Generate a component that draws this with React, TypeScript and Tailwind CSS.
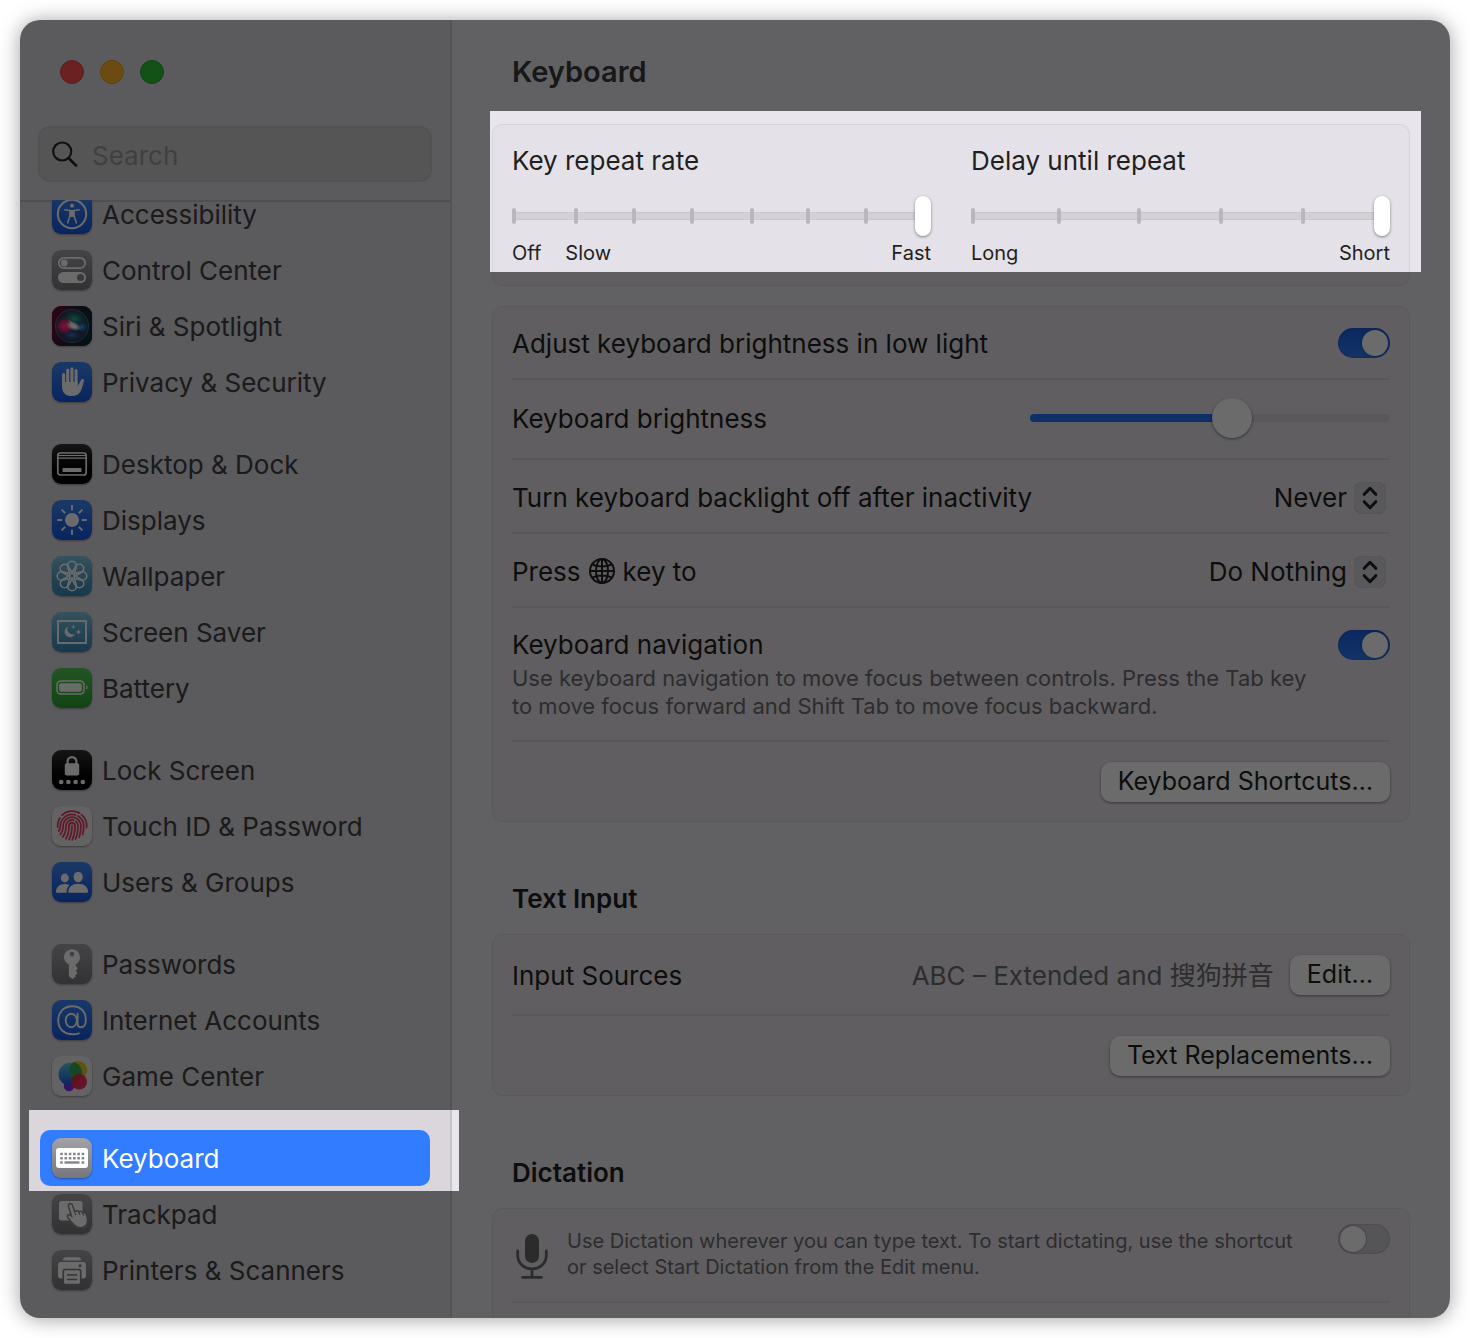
import React from "react";

const BLUE = "bg-linear-to-b from-[#3f86f5] to-[#1457e0]";
const GRAY = "bg-linear-to-b from-[#a3a3a7] to-[#77777b]";
const BLACK = "bg-linear-to-b from-[#333333] to-black";
const SKY = "bg-linear-to-b from-[#7cc4de] to-[#3787b8]";
const GREEN = "bg-linear-to-b from-[#55c957] to-[#2ba22d]";
const WHITE = "bg-[#ececee]";

function Glyph({ children }: { children: React.ReactNode }) {
  return (
    <svg viewBox="0 0 40 40" className="size-10" fill="none" aria-hidden="true">
      {children}
    </svg>
  );
}

function AccessibilityGlyph() {
  return (
    <Glyph>
      <circle cx="20" cy="20" r="14.2" stroke="#fff" strokeWidth="2" />
      <circle cx="20" cy="11.8" r="2" fill="#fff" />
      <path d="M12.8 15.8 18 16.600v4.900l-2.300 7.500M27.200 15.800 22 16.600v4.900l2.300 7.500" stroke="#fff" strokeWidth="1.500" strokeLinecap="round" strokeLinejoin="round" />
      <path d="M17.500 16h5v5.900l-.8 1.200h-3.400l-.8-1.200z" fill="#fff" />
    </Glyph>
  );
}

function ControlCenterGlyph() {
  return (
    <Glyph>
      <rect x="6.800" y="7.800" width="26.400" height="10.400" rx="5.200" stroke="#fff" strokeWidth="1.800" />
      <circle cx="12.300" cy="13" r="3.400" fill="#fff" />
      <rect x="6" y="22" width="28" height="11" rx="5.500" fill="#fff" />
      <circle cx="28.500" cy="27.500" r="3.600" fill="#8a8a8e" />
    </Glyph>
  );
}

function SiriGlyph() {
  return (
    <Glyph>
      <defs>
        <linearGradient id="siri-bg" x1="0" y1="0.300" x2="1" y2="0.600">
          <stop offset="0" stopColor="#6d0d33" />
          <stop offset="0.500" stopColor="#23202f" />
          <stop offset="1" stopColor="#0b2b3c" />
        </linearGradient>
        <radialGradient id="siri-red">
          <stop offset="0" stopColor="#ff3a86" />
          <stop offset="0.500" stopColor="#e02a70" />
          <stop offset="1" stopColor="#c01858" stopOpacity="0" />
        </radialGradient>
        <radialGradient id="siri-blue">
          <stop offset="0" stopColor="#3aa8ff" />
          <stop offset="1" stopColor="#1560c0" stopOpacity="0" />
        </radialGradient>
        <radialGradient id="siri-green">
          <stop offset="0" stopColor="#28b890" />
          <stop offset="1" stopColor="#148060" stopOpacity="0" />
        </radialGradient>
        <radialGradient id="siri-core">
          <stop offset="0" stopColor="#fff" />
          <stop offset="0.300" stopColor="#fff" />
          <stop offset="1" stopColor="#fff" stopOpacity="0" />
        </radialGradient>
      </defs>
      <rect width="40" height="40" fill="url(#siri-bg)" />
      <circle cx="20" cy="20" r="16" fill="#2c3f68" fillOpacity="0.700" />
      <ellipse cx="22" cy="13" rx="13" ry="9" fill="url(#siri-green)" />
      <ellipse cx="13" cy="20" rx="10" ry="9" fill="url(#siri-red)" />
      <ellipse cx="30" cy="21" rx="7" ry="6" fill="url(#siri-blue)" />
      <ellipse cx="20" cy="29" rx="10" ry="6" fill="url(#siri-blue)" fillOpacity="0.600" />
      <ellipse cx="21.500" cy="20" rx="8" ry="4.500" transform="rotate(20 21 20)" fill="url(#siri-core)" />
      <path d="M16 13.500 23 18l3 5-5.500-2z" fill="#fff" fillOpacity="0.700" />
      <circle cx="20" cy="20" r="16.500" stroke="#5b9c98" strokeOpacity="0.700" strokeWidth="0.900" />
    </Glyph>
  );
}

function HandGlyph() {
  return (
    <Glyph>
      <path d="M11.600 12.500v12M15.700 8v14M19.900 6.800v14M24.100 8.500v14" stroke="#fff" strokeWidth="3.100" strokeLinecap="round" />
      <path d="M10 20h15.700v4.500c1.300-2.600 2.300-4.700 3.300-6.600.8-1.400 3.200-.9 2.900 1-.9 4.200-2 8-3.700 11.200-1.600 2.700-4.400 4-8.200 4-6.600 0-10-3.600-10-9.600z" fill="#fff" />
    </Glyph>
  );
}

function DesktopGlyph() {
  return (
    <Glyph>
      <rect x="5.800" y="9" width="28.400" height="22" rx="2.500" stroke="#fff" strokeWidth="1.700" />
      <path d="M6 11.500h28M6 14.200h28" stroke="#fff" strokeWidth="1.200" />
      <rect x="10.500" y="24" width="19" height="4" rx="0.800" fill="#fff" />
    </Glyph>
  );
}

function SunGlyph() {
  return (
    <Glyph>
      <circle cx="20" cy="20" r="7" fill="#fff" />
      <path d="M20 6v3.500M20 30.500V34M6 20h3.500M30.500 20H34M10.100 10.100l2.500 2.500M27.400 27.400l2.500 2.500M29.900 10.100l-2.500 2.500M12.600 27.400l-2.500 2.500" stroke="#fff" strokeWidth="2" strokeLinecap="round" />
    </Glyph>
  );
}

function FlowerGlyph() {
  return (
    <Glyph>
      {[0, 45, 90, 135, 180, 225, 270, 315].map((angle) => (
        <path
          key={angle}
          d="M17.800 18.500C17.500 15.500 15.700 12.500 15.700 9.500a4.300 4.300 0 1 1 8.600 0C24.300 12.500 22.500 15.500 22.200 18.500"
          transform={`rotate(${angle} 20 20)`}
          stroke="#fff"
          strokeWidth="1.600"
        />
      ))}
      <circle cx="20" cy="20" r="2.400" stroke="#fff" strokeWidth="1.200" />
    </Glyph>
  );
}

function ScreenSaverGlyph() {
  return (
    <Glyph>
      <rect x="6" y="9" width="28" height="22" stroke="#fff" strokeWidth="1.900" />
      <path d="M16 14.500a5.600 5.600 0 1 0 7.200 7.600 5.600 5.600 0 0 1-7.200-7.600z" fill="#fff" />
      <path d="m26.500 17 .8 2.200 2.200.8-2.200.8-.8 2.200-.8-2.200-2.200-.8 2.200-.8zM21.300 12.600l.6 1.700 1.700.6-1.700.6-.6 1.700-.6-1.700-1.700-.6 1.700-.6z" fill="#fff" />
    </Glyph>
  );
}

function BatteryGlyph() {
  return (
    <Glyph>
      <rect x="5" y="13" width="27" height="13" rx="3.800" stroke="#fff" strokeWidth="1.500" />
      <rect x="7.200" y="15.200" width="22.600" height="8.600" rx="2" fill="#fff" />
      <path d="M34.200 17.300c1.800.7 1.800 3.700 0 4.400z" fill="#fff" />
    </Glyph>
  );
}

function LockGlyph() {
  return (
    <Glyph>
      <path d="M15.600 14v-2.500a4.400 4.400 0 0 1 8.800 0V14" stroke="#fff" strokeWidth="2.200" />
      <rect x="12.800" y="13.200" width="14.400" height="12.200" rx="1.800" fill="#fff" />
      <circle cx="9.200" cy="32" r="2.300" fill="#fff" />
      <circle cx="16.400" cy="32" r="2.300" fill="#fff" />
      <circle cx="23.600" cy="32" r="2.300" fill="#fff" />
      <circle cx="30.800" cy="32" r="2.300" fill="#fff" />
    </Glyph>
  );
}

function TouchIdGlyph() {
  return (
    <Glyph>
      <g stroke="#e2395c" strokeWidth="1.800" strokeLinecap="round">
        <path d="M10 9.200a14.600 14.600 0 0 1 17.500-2.100" />
        <path d="M29.500 8.600a14.600 14.600 0 0 1 5 13" />
        <path d="M7.800 12a14.600 14.600 0 0 0-2.200 9" />
        <path d="M6.600 25c1.600-1.500 1.500-3 1.700-5.200a11.800 11.800 0 0 1 15.200-10.900" />
        <path d="M26 10a11.800 11.800 0 0 1 5.700 10c0 3.300-.2 5.800-1 8.500" />
        <path d="M8.300 28.300c2.600-2.500 2.700-5 2.800-8.300a8.900 8.900 0 0 1 17.800 0c0 4.200-.5 7.800-1.700 11.300" />
        <path d="M10.800 30.800c3-3.500 3.200-6.800 3.200-10.800a6 6 0 0 1 7.500-5.800" />
        <path d="M23.800 15.400c1.700 1.200 2.200 2.800 2.200 4.600 0 5-.8 9.200-2.400 13" />
        <path d="M13.800 32.800c2.800-4 3.200-8 3.200-12.800a3 3 0 0 1 6 0c0 5.200-.8 9.700-2.800 13.800" />
        <path d="M20 19.800c0 5.200-.8 9.800-3 13.800" />
      </g>
    </Glyph>
  );
}

function UsersGlyph() {
  return (
    <Glyph>
      <ellipse cx="12.800" cy="16" rx="4" ry="4.400" fill="#fff" />
      <ellipse cx="26.200" cy="15" rx="4.600" ry="5.200" fill="#fff" />
      <path d="M4 29.500c0-4 3.500-7.500 8.600-7.500 1.900 0 3.600.5 5 1.300-1.900 1.600-3 3.700-3 6.200v1.300H5c-.7 0-1-.5-1-1.300z" fill="#fff" />
      <path d="M16.300 29.500c0-4.300 4-7.700 9.900-7.700s9.800 3.400 9.800 7.700c0 .8-.4 1.300-1.200 1.300H17.500c-.8 0-1.200-.5-1.200-1.300z" fill="#fff" />
    </Glyph>
  );
}

function KeyGlyph() {
  return (
    <Glyph>
      <path fillRule="evenodd" d="M20 5.200a8 8 0 0 1 3.800 15v1.900l2 2.100-2 2.600 1.800 2.100-2.300 2.500.6 1.200L20.500 35l-3.600-2.800V20.600A8 8 0 0 1 20 5.200zm0 2.600a2.300 2.300 0 1 0 0 4.600 2.300 2.300 0 0 0 0-4.600z" fill="#fff" />
    </Glyph>
  );
}

function AtGlyph() {
  return (
    <Glyph>
      <g stroke="#fff" strokeWidth="1.900" strokeLinecap="round">
        <ellipse cx="19.300" cy="20.500" rx="5.600" ry="6.700" />
        <path d="M25.600 13.800v9.700c0 2.400 1.200 3.800 3.300 3.800 3.200 0 4.900-3.200 4.900-7.600C33.800 11.500 28.500 6.200 20.500 6.200 12 6.200 6.200 11.900 6.200 20.300c0 8.600 5.700 14 14.600 14 2.200 0 4.300-.3 6-1" />
      </g>
    </Glyph>
  );
}

function GameCenterGlyph() {
  return (
    <Glyph>
      <defs>
        <linearGradient id="gc-blue" x1="0" y1="0" x2="0" y2="1">
          <stop offset="0" stopColor="#4fd0d8" />
          <stop offset="1" stopColor="#2452e8" />
        </linearGradient>
        <linearGradient id="gc-yellow" x1="0" y1="0" x2="0" y2="1">
          <stop offset="0" stopColor="#f5c21d" />
          <stop offset="1" stopColor="#b9cc2a" />
        </linearGradient>
      </defs>
      <circle cx="17" cy="30" r="5.200" fill="#8a2be6" />
      <circle cx="18" cy="18.200" r="11.400" fill="url(#gc-blue)" />
      <circle cx="26" cy="14" r="9" fill="url(#gc-yellow)" />
      <path d="M22 6A11.400 11.400 0 0 1 28.500 22.600 9 9 0 0 1 17.200 12.500 9 9 0 0 1 22 6z" fill="#35a853" />
      <circle cx="27.200" cy="25.800" r="7.800" fill="#ee2f62" />
      <path d="M19.500 24.500a7.800 7.800 0 0 1 9.500-6.200 11.400 11.400 0 0 1-9.500 11.200 7.800 7.800 0 0 1 0-5z" fill="#d8323c" />
    </Glyph>
  );
}

function KeyboardGlyph() {
  return (
    <Glyph>
      <rect x="4" y="10" width="32" height="20" rx="3" fill="#fff" />
      <path d="M8.200 16h24" stroke="#88888c" strokeWidth="2.600" strokeDasharray="2.600 1.680" />
      <path d="M8.200 20.200h24" stroke="#88888c" strokeWidth="2.600" strokeDasharray="2.600 1.680" />
      <path d="M8.200 24.500h2.600M12.500 24.500h15M29.600 24.500h2.600" stroke="#88888c" strokeWidth="2.600" />
    </Glyph>
  );
}

function TrackpadGlyph() {
  return (
    <Glyph>
      <rect x="7" y="7" width="23.500" height="19.500" rx="2.500" fill="#fff" />
      <path d="M16.400 12.200c-.5-2.900 3.400-3.500 4.200-.8l2 6.200c2-1.500 3.700-.8 4.200.2 1.900-1 3.400-.2 3.900 1 2-.6 3.400.4 3.800 2.200 1.300 4.200 2 7.400-.5 10.200-3 3.300-8.300 3.300-11.400 0-2.600-2.300-5.200-5-6.800-7.700-1.400-2.200 1-4 2.700-2.300l.9.800z" fill="#fff" stroke="#8b8b8f" strokeWidth="1.500" />
      <path d="M22.600 17.600l1 3M26.800 17.800l.9 2.700M30.700 18.800l.7 2.300" stroke="#8b8b8f" strokeWidth="1.200" strokeLinecap="round" />
    </Glyph>
  );
}

function PrinterGlyph() {
  return (
    <Glyph>
      <path d="M11 10.500c0-2.400 1-3.300 3-3.300h12c2 0 3 .9 3 3.300z" fill="#fff" />
      <rect x="6" y="12" width="28" height="16.500" rx="3" fill="#fff" />
      <circle cx="28" cy="15.800" r="1.500" fill="#858589" />
      <rect x="11.300" y="19.500" width="17.400" height="15" rx="2" fill="#fff" stroke="#7d7d81" strokeWidth="1.600" />
      <path d="M15.500 25h9.200M15.500 29.600h9.200" stroke="#7d7d81" strokeWidth="1.500" strokeLinecap="round" />
    </Glyph>
  );
}

type Item = { label: string; tile: string; icon: () => React.ReactElement };

const groups: Item[][] = [
  [
    { label: "Accessibility", tile: BLUE, icon: AccessibilityGlyph },
    { label: "Control Center", tile: GRAY, icon: ControlCenterGlyph },
    { label: "Siri & Spotlight", tile: BLACK, icon: SiriGlyph },
    { label: "Privacy & Security", tile: BLUE, icon: HandGlyph },
  ],
  [
    { label: "Desktop & Dock", tile: BLACK, icon: DesktopGlyph },
    { label: "Displays", tile: BLUE, icon: SunGlyph },
    { label: "Wallpaper", tile: SKY, icon: FlowerGlyph },
    { label: "Screen Saver", tile: SKY, icon: ScreenSaverGlyph },
    { label: "Battery", tile: GREEN, icon: BatteryGlyph },
  ],
  [
    { label: "Lock Screen", tile: BLACK, icon: LockGlyph },
    { label: "Touch ID & Password", tile: WHITE, icon: TouchIdGlyph },
    { label: "Users & Groups", tile: BLUE, icon: UsersGlyph },
  ],
  [
    { label: "Passwords", tile: GRAY, icon: KeyGlyph },
    { label: "Internet Accounts", tile: BLUE, icon: AtGlyph },
    { label: "Game Center", tile: WHITE, icon: GameCenterGlyph },
  ],
  [
    { label: "Keyboard", tile: GRAY, icon: KeyboardGlyph },
    { label: "Trackpad", tile: GRAY, icon: TrackpadGlyph },
    { label: "Printers & Scanners", tile: GRAY, icon: PrinterGlyph },
  ],
];

function Sidebar() {
  return (
    <aside className="flex w-[432px] shrink-0 flex-col border-r-2 border-[#c6c3c9] bg-[#dad6dc] text-[26px]">
      <div className="flex gap-4 px-10 pt-10">
        <button aria-label="Close" className="size-6 rounded-full border border-[#dc4a46] bg-[#fe5050]" />
        <button aria-label="Minimize" className="size-6 rounded-full border border-[#dd9c22] bg-[#feb429]" />
        <button aria-label="Zoom" className="size-6 rounded-full border border-[#1e9e2a] bg-[#2fc436]" />
      </div>
      <label className="mx-[18px] mt-[42px] mb-[18px] flex h-14 items-center gap-[14px] rounded-[12px] border-2 border-[#c3c4c7] bg-[#cacbcd] px-3">
        <svg viewBox="0 0 26 26" className="size-[26px] shrink-0" fill="none" stroke="#262626" strokeWidth="2.200" strokeLinecap="round" aria-hidden="true">
          <circle cx="10.200" cy="10.500" r="9" />
          <path d="m17 17.500 7 7" strokeWidth="2.800" />
        </svg>
        <input type="search" aria-label="Search" placeholder="Search" className="w-full min-w-0 bg-transparent pt-[2px] outline-none placeholder:text-[#98989b]" />
      </label>
      <nav className="min-h-0 flex-1 overflow-hidden pr-5 pl-5 shadow-[inset_0_2px_0_#bfbdc1]">
        <div className="-mt-[14px] flex flex-col gap-[26px] pb-5">
          {groups.map((group) => (
            <ul key={group[0].label}>
              {group.map(({ label, tile, icon: Icon }) => {
                const selected = label === "Keyboard";
                return (
                  <li key={label}>
                    <a
                      href="#"
                      aria-current={selected ? "page" : undefined}
                      className={`flex h-14 items-center gap-[10px] rounded-[10px] px-3 leading-7 ${selected ? "bg-[#317cff] text-white" : "text-[#404042]"}`}
                    >
                      <span className={`flex size-10 shrink-0 items-center justify-center overflow-hidden rounded-[9px] shadow-[0_1px_2px_rgba(0,0,0,0.35)] ${tile}`}>
                        <Icon />
                      </span>
                      <span className="pt-px">{label}</span>
                    </a>
                  </li>
                );
              })}
            </ul>
          ))}
        </div>
      </nav>
    </aside>
  );
}

function StepSlider({ label, ticks, marks }: { label: string; ticks: number[]; marks: React.ReactNode }) {
  return (
    <div>
      <label className="block">
        <span className="block leading-8">{label}</span>
        <span className="relative mt-[19px] block h-10">
          <span className="absolute inset-x-0 top-4 h-2 rounded-full border-y border-[#c9c6cc] bg-[#d3d1d6]" />
          {ticks.map((tick) => (
            <span key={tick} className="absolute top-3 h-4 w-1 rounded-full bg-[#b9b6bd]" style={{ left: `${tick}%` }} />
          ))}
          <input
            type="range"
            min={0}
            max={ticks.length}
            defaultValue={ticks.length}
            className="relative block h-10 w-full appearance-none bg-transparent [&::-webkit-slider-thumb]:h-10 [&::-webkit-slider-thumb]:w-4 [&::-webkit-slider-thumb]:appearance-none [&::-webkit-slider-thumb]:rounded-full [&::-webkit-slider-thumb]:bg-white [&::-webkit-slider-thumb]:shadow-[0_1px_3px_rgba(0,0,0,0.45)]"
          />
        </span>
      </label>
      <div className="mt-1 flex justify-between text-[20px] leading-[26px]">{marks}</div>
    </div>
  );
}

function Toggle({ label, on = false }: { label: string; on?: boolean }) {
  return (
    <input
      type="checkbox"
      role="switch"
      aria-label={label}
      defaultChecked={on}
      className="h-[30px] w-[52px] shrink-0 appearance-none rounded-full bg-[#cbc9ce] p-[2px] shadow-[inset_0_0_2px_rgba(0,0,0,0.3)] before:block before:size-[26px] before:rounded-full before:bg-white before:shadow-[0_0_2px_rgba(0,0,0,0.5)] checked:bg-linear-to-b checked:from-[#1c5fe4] checked:to-[#2f7cf2] checked:before:ml-auto"
    />
  );
}

function Picker({ label, value }: { label: string; value: string }) {
  return (
    <div className="relative flex items-center">
      <select aria-label={label} defaultValue={value} className="field-sizing-content h-8 appearance-none bg-transparent pr-[43px] leading-8 outline-none">
        <option>{value}</option>
      </select>
      <span className="pointer-events-none absolute right-1 flex size-8 items-center justify-center rounded-lg bg-[#d5d2d8] shadow-[inset_0_0_1px_rgba(0,0,0,0.3)]">
        <svg viewBox="0 0 32 32" className="size-8" fill="none" stroke="#222" strokeWidth="3" strokeLinecap="round" strokeLinejoin="round" aria-hidden="true">
          <path d="m10.200 12.300 5.800-6 5.800 6M10.200 19.700l5.800 6 5.800-6" />
        </svg>
      </span>
    </div>
  );
}

function PushButton({ children }: { children: React.ReactNode }) {
  return (
    <button className="h-10 shrink-0 rounded-[10px] bg-white px-[17px] text-[25px] leading-8 shadow-[0_1px_3px_rgba(0,0,0,0.45)]">
      <span className="block pb-[2px]">{children}</span>
    </button>
  );
}

function Card({ children, className = "" }: { children: React.ReactNode; className?: string }) {
  return <section className={`rounded-[10px] border border-[#d5d2d8] bg-[#e4e1e8] px-[19px] ${className}`}>{children}</section>;
}

const RULE = "border-b-2 border-[#d4d1d7]";

function GlobeIcon() {
  return (
    <svg viewBox="0 0 26 26" className="mx-2 mb-[2px] size-[26px]" fill="none" stroke="#222" strokeWidth="2" role="img" aria-label="Globe">
      <circle cx="13" cy="13" r="12" />
      <ellipse cx="13" cy="13" rx="6" ry="12" />
      <path d="M13 1v24M1 13h24M3.500 6.500c5 2.600 14 2.600 19 0M3.500 19.500c5-2.600 14-2.600 19 0" />
    </svg>
  );
}

function MicIcon() {
  return (
    <svg viewBox="0 0 32 46" className="h-[46px] w-8 shrink-0" fill="none" stroke="#68686a" strokeLinecap="round" aria-hidden="true">
      <rect x="9" y="1" width="14" height="29" rx="7" fill="#68686a" stroke="none" />
      <path d="M1.700 18v4.500a14.300 13.500 0 0 0 28.600 0V18M16 36v8M6.500 44.300h19" strokeWidth="2.800" />
    </svg>
  );
}

function Settings() {
  return (
    <main className="min-w-0 flex-1 overflow-hidden bg-[#e8e5ec] px-10 text-[26px] text-[#1f1f21]">
      <h1 className="px-5 pt-8 text-[29px] leading-10 font-semibold text-[#3a3a3c]">Keyboard</h1>

      <Card className="mt-8 grid grid-cols-2 gap-10 pt-5 pb-[19px]">
        <StepSlider
          label="Key repeat rate"
          ticks={[0, 14.8, 28.6, 42.5, 56.8, 70.2, 84]}
          marks={
            <>
              <span className="flex gap-6">
                <span>Off</span>
                <span>Slow</span>
              </span>
              <span>Fast</span>
            </>
          }
        />
        <StepSlider
          label="Delay until repeat"
          ticks={[0, 20.5, 39.6, 59.2, 78.8]}
          marks={
            <>
              <span>Long</span>
              <span>Short</span>
            </>
          }
        />
      </Card>

      <Card className="mt-5">
        <div className={`flex min-h-[73px] items-center justify-between ${RULE}`}>
          <span className="pt-px">Adjust keyboard brightness in low light</span>
          <Toggle label="Adjust keyboard brightness in low light" on />
        </div>
        <label className={`flex min-h-20 items-center justify-between pb-[2px] ${RULE}`}>
          <span>Keyboard brightness</span>
          <input
            type="range"
            defaultValue={57}
            className="h-10 w-[360px] appearance-none bg-transparent [&::-webkit-slider-runnable-track]:h-2 [&::-webkit-slider-runnable-track]:rounded-full [&::-webkit-slider-runnable-track]:bg-[linear-gradient(to_right,#2470f5_56%,#d3d0d6_56%)] [&::-webkit-slider-thumb]:-mt-4 [&::-webkit-slider-thumb]:size-10 [&::-webkit-slider-thumb]:appearance-none [&::-webkit-slider-thumb]:rounded-full [&::-webkit-slider-thumb]:bg-white [&::-webkit-slider-thumb]:shadow-[0_1px_3px_rgba(0,0,0,0.5)]"
          />
        </label>
        <div className={`flex min-h-[74px] items-center justify-between pt-[3px] ${RULE}`}>
          <span>Turn keyboard backlight off after inactivity</span>
          <Picker label="Turn keyboard backlight off after inactivity" value="Never" />
        </div>
        <div className={`flex min-h-[74px] items-center justify-between pt-[3px] ${RULE}`}>
          <span className="flex items-center">
            Press <GlobeIcon /> key to
          </span>
          <Picker label="Press globe key to" value="Do Nothing" />
        </div>
        <div className={`flex items-start justify-between pt-[22px] pb-5 ${RULE}`}>
          <div>
            <p className="leading-[30px]">Keyboard navigation</p>
            <p className="mt-1 text-[22px] leading-7 text-[#6b6b6e]">
              Use keyboard navigation to move focus between controls. Press the Tab key
              <br />
              to move focus forward and Shift Tab to move focus backward.
            </p>
          </div>
          <Toggle label="Keyboard navigation" on />
        </div>
        <div className="flex min-h-[79px] items-center justify-end">
          <PushButton>Keyboard Shortcuts…</PushButton>
        </div>
      </Card>

      <h2 className="mt-[61px] px-5 leading-8 font-semibold">Text Input</h2>
      <Card className="mt-[19px]">
        <div className={`flex min-h-[81px] items-center justify-between ${RULE}`}>
          <span className="pt-[2px]">Input Sources</span>
          <span className="flex items-center gap-4">
            <span className="pt-[2px] text-[#6b6b6e]">ABC – Extended and 搜狗拼音</span>
            <PushButton>Edit…</PushButton>
          </span>
        </div>
        <div className="flex min-h-[79px] items-center justify-end">
          <PushButton>Text Replacements…</PushButton>
        </div>
      </Card>

      <h2 className="mt-[61px] px-5 leading-8 font-semibold">Dictation</h2>
      <Card className="mt-[19px] pb-10">
        <div className={`flex items-start pt-[15px] pb-[21px] ${RULE}`}>
          <span className="mt-[9px] ml-1 flex">
            <MicIcon />
          </span>
          <p className="mt-1 ml-[19px] flex-1 text-[20px] leading-[26px] text-[#6b6b6e]">
            Use Dictation wherever you can type text. To start dictating, use the shortcut
            <br />
            or select Start Dictation from the Edit menu.
          </p>
          <Toggle label="Dictation" />
        </div>
      </Card>
    </main>
  );
}

export default function App() {
  return (
    <div className="h-screen min-h-[600px] bg-white p-5 font-['Inter','Noto_Sans_CJK_SC',sans-serif]">
      <div className="h-full rounded-[20px] shadow-[0_1px_20px_rgba(0,0,0,0.38)]">
        <div className="relative flex h-full overflow-hidden rounded-[20px]">
          <Sidebar />
          <Settings />
          <div className="pointer-events-none absolute inset-0 bg-black/58 [clip-path:polygon(evenodd,0_0,100%_0,100%_100%,0_100%,0_0,9px_1090px,439px_1090px,439px_1171px,9px_1171px,9px_1090px,0_0,470px_91px,calc(100%_-_29px)_91px,calc(100%_-_29px)_252px,470px_252px,470px_91px,0_0)]" />
        </div>
      </div>
    </div>
  );
}
